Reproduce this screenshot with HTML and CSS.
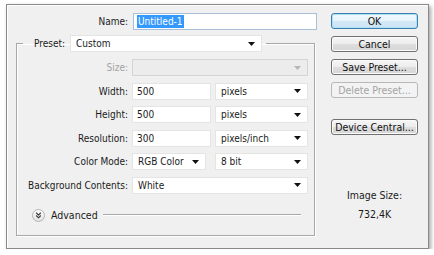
FILE: index.html
```html
<!DOCTYPE html>
<html lang="en">
<head>
    <meta charset="UTF-8">
    <title>New</title>
    <link rel="stylesheet" href="styles.css">
</head>
<body>
    <div class="dialog">
        <div class="main">
            <div class="name-row">
                <label class="lbl">Name:</label>
                <div class="field name-field"><span class="selected">Untitled-1</span></div>
            </div>
            <fieldset class="group">
                <legend class="preset">
                    <span class="preset-lbl">Preset:</span>
                    <div class="dropdown preset-dd"><span>Custom</span><svg class="arrow" viewBox="0 0 7 4"><path d="M0 0h7L3.5 4z"/></svg></div>
                </legend>
                <div class="rows">
                    <span class="lbl off">Size:</span>
                    <div class="dropdown off"><span></span><svg class="arrow" viewBox="0 0 7 4"><path d="M0 0h7L3.5 4z"/></svg></div>

                    <span class="lbl">Width:</span>
                    <div class="pair">
                        <div class="field num">500</div>
                        <div class="dropdown unit"><span>pixels</span><svg class="arrow" viewBox="0 0 7 4"><path d="M0 0h7L3.5 4z"/></svg></div>
                    </div>

                    <span class="lbl">Height:</span>
                    <div class="pair">
                        <div class="field num">500</div>
                        <div class="dropdown unit"><span>pixels</span><svg class="arrow" viewBox="0 0 7 4"><path d="M0 0h7L3.5 4z"/></svg></div>
                    </div>

                    <span class="lbl">Resolution:</span>
                    <div class="pair">
                        <div class="field num">300</div>
                        <div class="dropdown unit"><span>pixels/inch</span><svg class="arrow" viewBox="0 0 7 4"><path d="M0 0h7L3.5 4z"/></svg></div>
                    </div>

                    <span class="lbl">Color Mode:</span>
                    <div class="pair">
                        <div class="dropdown mode"><span>RGB Color</span><svg class="arrow" viewBox="0 0 7 4"><path d="M0 0h7L3.5 4z"/></svg></div>
                        <div class="dropdown unit"><span>8 bit</span><svg class="arrow" viewBox="0 0 7 4"><path d="M0 0h7L3.5 4z"/></svg></div>
                    </div>

                    <span class="lbl">Background Contents:</span>
                    <div class="dropdown"><span>White</span><svg class="arrow" viewBox="0 0 7 4"><path d="M0 0h7L3.5 4z"/></svg></div>
                </div>
                <div class="advanced">
                    <span class="adv-btn">
                        <svg viewBox="0 0 12 12"><path d="M3.5 3l2.5 2.5L8.5 3M3.5 6l2.5 2.5L8.5 6" fill="none" stroke="#333" stroke-width="1.2"/></svg>
                    </span>
                    <span class="adv-text">Advanced</span>
                    <span class="adv-line"></span>
                </div>
            </fieldset>
        </div>
        <div class="side">
            <button class="btn default">OK</button>
            <button class="btn">Cancel</button>
            <button class="btn">Save Preset...</button>
            <button class="btn" disabled>Delete Preset...</button>
            <button class="btn device">Device Central...</button>
            <div class="image-size">
                <div>Image Size:</div>
                <div class="size-value">732,4K</div>
            </div>
        </div>
    </div>
</body>
</html>
```

FILE: styles.css
```css
body {
    margin: 0;
    background-color: #fff;
    font-family: "DejaVu Sans Condensed", "DejaVu Sans", sans-serif;
    font-stretch: condensed;
    font-size: 10px;
    color: #1b1b1b;
}
.dialog {
    display: flex;
    box-sizing: border-box;
    width: 423px;
    height: 245px;
    margin: 4px 0 0 6px;
    padding: 8px 10px 0 9px;
    background-color: #f0f0f0;
    border: 1px solid #8a8a8a;
    box-shadow: inset 1px 1px 0 #fff, 2px 2px 4px rgba(0, 0, 0, 0.35);
}
.main {
    width: 301px;
}
.lbl {
    text-align: right;
    line-height: 17px;
    white-space: nowrap;
}
.lbl.off {
    color: #a3a3a3;
}
.name-row {
    display: flex;
    gap: 5px;
}
.name-row .lbl {
    width: 112px;
}
.field {
    box-sizing: border-box;
    height: 17px;
    line-height: 15px;
    background-color: #fff;
    border: 1px solid #e4e4e4;
    padding-left: 4px;
}
.name-field {
    width: 184px;
    border-color: #a9bfd6;
    padding-left: 3px;
    line-height: 13px;
    padding-top: 1px;
}
.selected {
    display: inline-block;
    background-color: #3399ff;
    color: #fff;
    padding: 0 1px;
}
.group {
    box-sizing: border-box;
    width: 299px;
    margin: 5px 0 0 0;
    padding: 0 0 13px 0;
    min-width: 0;
    border: 1px solid #a8a8a8;
    box-shadow: inset 1px 1px 0 #fff, 1px 1px 0 #fff;
}
.preset {
    display: flex;
    align-items: center;
    gap: 5px;
    margin-left: 6px;
    padding: 0 4px 0 11px;
}
.dropdown {
    box-sizing: border-box;
    display: flex;
    align-items: center;
    justify-content: space-between;
    height: 17px;
    padding: 0 6px 0 5px;
    background-color: #fff;
    border: 1px solid #e4e4e4;
}
.preset-dd {
    width: 192px;
}
.dropdown.off {
    background-color: #ececec;
    border-color: #d4d4d4;
}
.dropdown.off .arrow {
    fill: #b5b5b5;
}
.arrow {
    width: 7px;
    height: 4px;
    fill: #111;
    flex-shrink: 0;
}
.rows {
    display: grid;
    grid-template-columns: 111px 176px;
    column-gap: 4px;
    row-gap: 6.6px;
    padding-top: 7px;
}
.pair {
    display: flex;
    justify-content: space-between;
}
.num {
    width: 79px;
}
.unit {
    width: 93px;
}
.mode {
    width: 74px;
}
.advanced {
    display: flex;
    align-items: center;
    height: 13px;
    margin-top: 15px;
    padding: 0 13px 0 15px;
}
.adv-btn {
    box-sizing: border-box;
    display: flex;
    width: 13px;
    height: 13px;
    border-radius: 50%;
    border: 1px solid #b4b4b4;
    background: linear-gradient(#fdfdfd, #e2e2e2);
}
.adv-btn svg {
    width: 11px;
    height: 11px;
}
.adv-text {
    margin-left: 6px;
    font-size: 10.5px;
}
.adv-line {
    flex: 1;
    height: 0;
    margin-left: 5px;
    border-top: 1px solid #a8a8a8;
    border-bottom: 1px solid #fff;
}
.side {
    display: flex;
    flex-direction: column;
    width: 88px;
    margin-left: 14px;
}
.btn {
    box-sizing: border-box;
    height: 16px;
    margin-bottom: 7px;
    padding: 0;
    font-family: inherit;
    font-stretch: condensed;
    font-size: 10.5px;
    color: #111;
    background: linear-gradient(#f6f6f6, #ececec 50%, #dedede 50%, #d6d6d6);
    border: 1px solid #707070;
    border-radius: 3px;
    box-shadow: inset 0 0 0 1px #fbfbfb;
}
.btn.default {
    border-color: #3c7fb1;
    background: linear-gradient(#f2f9fd, #e6f2fa 50%, #d4e9f7 50%, #cce3f4);
    box-shadow: inset 0 0 0 1px #aee0f6;
}
.btn:disabled {
    color: #a3a3a3;
    border-color: #b5b9bc;
    background: #f3f3f3;
    box-shadow: none;
}
.btn.device {
    margin-top: 14px;
}
.image-size {
    margin-top: 47px;
    text-align: center;
    font-size: 10.5px;
    line-height: 13px;
}
.size-value {
    margin-top: 6px;
}
```
